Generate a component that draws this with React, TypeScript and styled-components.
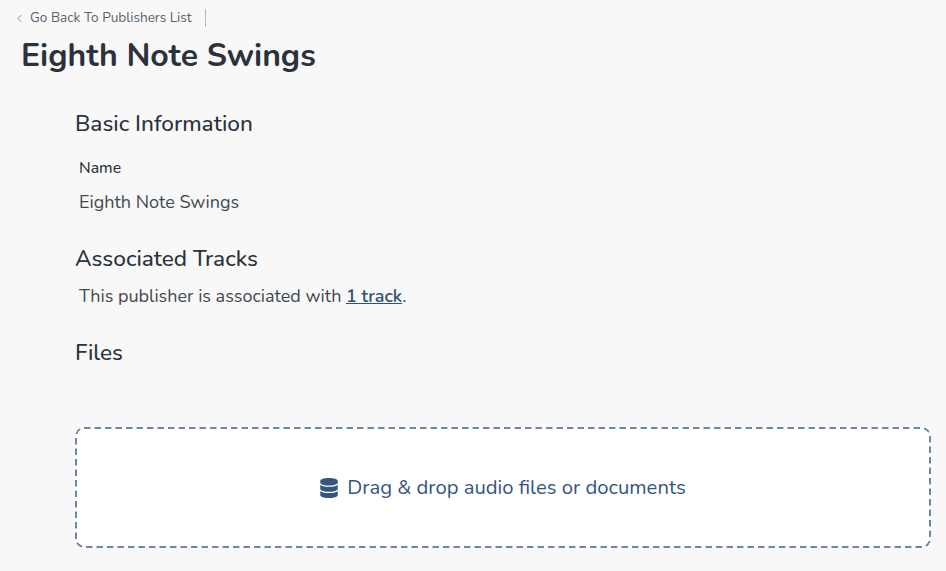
import { createGlobalStyle } from "styled-components"
import styled from "styled-components"

const GlobalStyle = createGlobalStyle`
    html, body {
        margin: 0;
        padding: 0;
        background-color: #f8f8f8;
        font-family: "Nunito", "Open Sans", "Noto Sans", sans-serif;
        color: #2c3338;
    }
`;

const Page = styled.div`
    width: 946px;
    height: 571px;
    overflow: hidden;
`;

const TopBar = styled.div`
    display: flex;
    align-items: center;
    height: 18px;
    margin-top: 9px;
    padding-left: 17px;
`;

const BackLink = styled.a`
    display: flex;
    align-items: center;
    gap: 8px;
    font-size: 13.6px;
    line-height: 16px;
    color: #5b6268;
    padding-right: 14px;
    border-right: 1px solid #b5b9bd;
    height: 18px;
`;

const Title = styled.h1`
    margin: 7px 0 0 21px;
    font-size: 32px;
    line-height: 44px;
    font-weight: 700;
    color: #2b323c;
`;

const Content = styled.main`
    padding: 31px 15px 0 75px;
`;

const SectionTitle = styled.h2`
    margin: 0;
    font-size: 22.6px;
    line-height: 30px;
    font-weight: 500;
    color: #2b323c;
`;

const Label = styled.div`
    margin: 19px 0 0 4px;
    font-size: 15.75px;
    line-height: 20px;
    font-weight: 500;
    color: #2f353c;
`;

const Value = styled.p<{ $top: number }>`
    margin: ${(p) => p.$top}px 0 0 4px;
    font-size: 18px;
    line-height: 24px;
    color: #41484f;
`;

const Spaced = styled.div<{ $top: number }>`
    margin-top: ${(p) => p.$top}px;
`;

const TrackLink = styled.a`
    color: #2f4f73;
    font-weight: 600;
    text-decoration: underline;
`;

const dashedOutline = encodeURIComponent(
    `<svg xmlns="http://www.w3.org/2000/svg" width="100%" height="100%"><rect x="1" y="1" width="854" height="119" rx="8" fill="none" stroke="#6f87a3" stroke-width="2" stroke-dasharray="6.5 4"/></svg>`
);

const DropZone = styled.div`
    margin-top: 59px;
    height: 121px;
    display: flex;
    align-items: center;
    justify-content: center;
    gap: 9px;
    background-color: #ffffff;
    background-image: url("data:image/svg+xml,${dashedOutline}");
    border-radius: 9px;
    color: #34557f;
    font-size: 20.25px;
`;

const DatabaseIcon = () => (
    <svg width="18" height="20" viewBox="0 0 448 512" fill="#34557f">
        <path d="M448 73.1v45.8C448 159.2 347.7 192 224 192S0 159.2 0 118.9V73.1C0 32.8 100.3 0 224 0s224 32.8 224 73.1zM448 176v103c0 40.3-100.3 73-224 73S0 319.300 0 279V176c48.100 33.100 136.200 48.600 224 48.600S399.900 209.100 448 176zm0 160v103c0 40.300-100.300 73-224 73S0 479.300 0 439V336c48.100 33.100 136.200 48.600 224 48.600S399.900 369.100 448 336z" />
    </svg>
);

const BackChevron = () => (
    <svg width="5" height="9" viewBox="0 0 6 10" fill="none" stroke="#8a9096" strokeWidth="1.2">
        <path d="M5 1 1 5l4 4" />
    </svg>
);

export default function App() {
    return (
        <Page>
            <GlobalStyle />
            <TopBar>
                <BackLink>
                    <BackChevron />
                    Go Back To Publishers List
                </BackLink>
            </TopBar>
            <Title>Eighth Note Swings</Title>
            <Content>
                <SectionTitle>Basic Information</SectionTitle>
                <Label>Name</Label>
                <Value $top={12}>Eighth Note Swings</Value>
                <Spaced $top={30}>
                    <SectionTitle>Associated Tracks</SectionTitle>
                </Spaced>
                <Value $top={10}>
                    This publisher is associated with <TrackLink>1 track</TrackLink>.
                </Value>
                <Spaced $top={30}>
                    <SectionTitle>Files</SectionTitle>
                </Spaced>
                <DropZone>
                    <DatabaseIcon />
                    Drag &amp; drop audio files or documents
                </DropZone>
            </Content>
        </Page>
    )
}
